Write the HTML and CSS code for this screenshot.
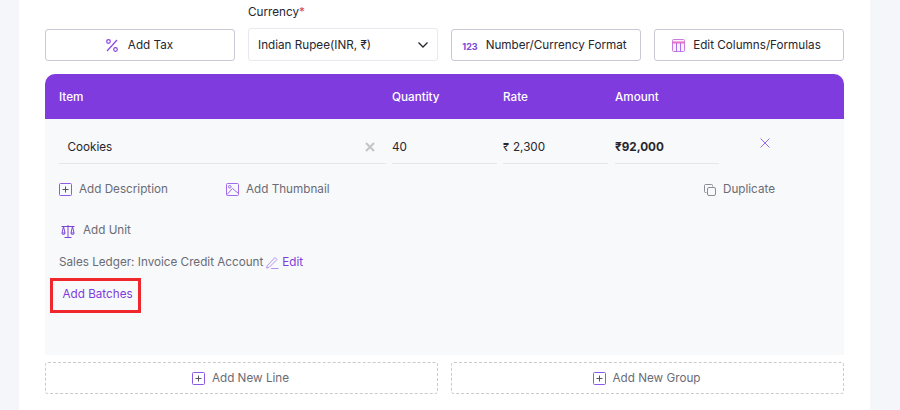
FILE: index.html
```html
<!DOCTYPE html>
<html lang="en">
  <head>
    <meta charset="utf-8"/>
    <title>Invoice items</title>
    <link rel="stylesheet" href="styles.css">
  </head>
  <body>
    <div class="sheet">
      <div class="toolbar">
        <button class="tool tool-tax">
          <svg class="icon" width="12" height="13" viewBox="0 0 12 13" fill="none" stroke="#8b45e6" stroke-width="1.2"><path d="M11 1 1 12"/><circle cx="2.500" cy="2.500" r="1.800"/><circle cx="9.500" cy="10.500" r="1.800"/></svg>
          Add Tax
        </button>
        <div class="field">
          <label class="label">Currency<span class="req">*</span></label>
          <div class="select">
            <span>Indian Rupee(INR, ₹)</span>
            <svg width="12" height="8" viewBox="0 0 12 8" fill="none" stroke="#26262e" stroke-width="1.3"><path d="M1.500 1.500 6 6l4.500-4.500"/></svg>
          </div>
        </div>
        <button class="tool tool-number">
          <span class="num-icon">123</span>
          Number/Currency Format
        </button>
        <button class="tool tool-columns">
          <svg class="icon" width="13" height="13" viewBox="0 0 13 13" fill="none" stroke="#c77ae0" stroke-width="1"><rect x="0.5" y="0.5" width="12" height="12" fill="#f9eefc" rx="1"/><path d="M0.5 3.500h12" stroke="#ec6fc4" stroke-width="2"/><path d="M4.500 4v9M8.500 4v9" stroke="#a66fe8"/></svg>
          Edit Columns/Formulas
        </button>
      </div>

      <div class="items">
        <div class="items-head row-grid">
          <div>Item</div>
          <div>Quantity</div>
          <div>Rate</div>
          <div class="col-amount">Amount</div>
        </div>
        <div class="items-body">
          <div class="row-grid">
            <div class="cell cell-item">
              <span>Cookies</span>
              <svg width="10" height="10" viewBox="0 0 10 10" fill="none" stroke="#c4c4c8" stroke-width="2"><path d="M1 1l8 8M9 1 1 9"/></svg>
            </div>
            <div class="cell">40</div>
            <div class="cell cell-rate"><span class="rupee">₹</span> 2,300</div>
            <div class="cell cell-total col-amount">₹92,000</div>
            <svg class="remove" width="10" height="10" viewBox="0 0 10 10" fill="none" stroke="#8b5be6" stroke-width="0.9"><path d="M.5.5l9 9M9.500.5l-9 9"/></svg>
          </div>

          <div class="links">
            <a class="link link-desc">
              <svg class="plus" width="13" height="13" viewBox="0 0 13 13" fill="none" stroke="#8b5be6"><rect x="0.5" y="0.5" width="12" height="12" rx="1"/><path d="M6.500 3.500v6M3.500 6.500h6" stroke="#55555f"/></svg>
              Add Description
            </a>
            <a class="link">
              <svg class="plus" width="13" height="13" viewBox="0 0 13 13" fill="none" stroke="#a06cea"><rect x="0.5" y="0.5" width="12" height="12" rx="1"/><circle cx="3.800" cy="3.800" r="1.300"/><path d="M.5 12 6.500 5.500l6 5"/></svg>
              Add Thumbnail
            </a>
            <a class="link link-copy">
              <svg class="plus" width="12" height="12" viewBox="0 0 12 12" fill="none" stroke="#8d8d95"><rect x="3.500" y="3.500" width="8" height="8" rx="1.500" fill="#f8f9fb"/><path d="M2.500 8.500h-1a1 1 0 0 1-1-1v-6a1 1 0 0 1 1-1h6a1 1 0 0 1 1 1v1"/></svg>
              Duplicate
            </a>
          </div>

          <a class="link link-unit">
            <svg class="scale" width="14" height="14" viewBox="0 0 14 14" fill="none" stroke="#7d45d8"><path d="M7 1v12M3.500 13.500h7M.5 2.500h13"/><path d="M2.500 2.500 1 9h3zM11.500 2.500 10 9h3z"/><path d="M1 9a1.500 1.500 0 0 0 3 0M10 9a1.500 1.500 0 0 0 3 0"/></svg>
            Add Unit
          </a>

          <div class="ledger">
            Sales Ledger: Invoice Credit Account
            <svg class="pen" width="13" height="13" viewBox="0 0 13 13" fill="none" stroke="#b490ee"><path d="M1 10 9 1.500l2 2L3 11.500l-2.500.5zM5 12.500h7.500"/></svg>
            <a class="purple">Edit</a>
          </div>

          <div class="batches"><a class="purple">Add Batches</a></div>
        </div>
      </div>

      <div class="adders">
        <button class="adder">
          <svg class="plus" width="13" height="13" viewBox="0 0 13 13" fill="none" stroke="#8b5be6"><rect x="0.5" y="0.5" width="12" height="12" rx="1"/><path d="M6.500 3.500v6M3.500 6.500h6" stroke="#55555f"/></svg>
          Add New Line
        </button>
        <button class="adder">
          <svg class="plus" width="13" height="13" viewBox="0 0 13 13" fill="none" stroke="#8b5be6"><rect x="0.5" y="0.5" width="12" height="12" rx="1"/><path d="M6.500 3.500v6M3.500 6.500h6" stroke="#55555f"/></svg>
          Add New Group
        </button>
      </div>
    </div>
  </body>
</html>
```

FILE: styles.css
```css
* {
  box-sizing: border-box;
}
html, body {
  height: 100%;
}
body {
  margin: 0;
  background: #f5f6fa;
  font-family: Inter, "Liberation Sans", sans-serif;
  font-size: 11.7px;
  color: #26262e;
  overflow: hidden;
}
.sheet {
  width: 851px;
  height: 410px;
  margin-left: 19px;
  padding: 0 26px;
  background: #fff;
}
.toolbar {
  display: grid;
  grid-template-columns: repeat(4, 190px);
  column-gap: 13px;
  align-items: end;
  height: 74px;
  padding-bottom: 13px;
}
.tool {
  display: flex;
  align-items: center;
  justify-content: center;
  gap: 9px;
  height: 32px;
  padding: 0;
  background: #fff;
  border: 1px solid #c9c9d6;
  border-radius: 3px;
  font: inherit;
  color: inherit;
}
.tool-tax {
  gap: 10px;
  padding-right: 1px;
}
.tool-number {
  gap: 8px;
  padding-right: 3px;
}
.tool-columns {
  gap: 8px;
  padding-right: 5px;
}
.icon {
  flex: none;
}
.num-icon {
  font-size: 9px;
  font-weight: 700;
  color: #7d45d8;
  margin-top: 2px;
}
.label {
  display: block;
  margin-bottom: 8px;
  line-height: 15px;
}
.req {
  color: #e04545;
}
.select {
  display: flex;
  align-items: center;
  justify-content: space-between;
  height: 33px;
  padding: 0 8px 0 9px;
  background: #fff;
  border: 1px solid #e8e8ee;
  border-radius: 3px;
}
.items {
  width: 799px;
}
.row-grid {
  display: grid;
  grid-template-columns: 327px 105px 105px 105px 1fr;
  column-gap: 6px;
}
.col-amount {
  margin-left: 1px;
}
.items-head {
  height: 45px;
  align-items: center;
  padding: 0 14px;
  background: #7f3bdd;
  border-radius: 10px 10px 0 0;
  color: #fff;
  font-weight: 500;
}
.items-body {
  height: 236px;
  padding: 0 14px;
  background: #f8f9fb;
}
.cell {
  display: flex;
  align-items: center;
  height: 45px;
  border-bottom: 1px solid #e6e6ec;
  padding-top: 11px;
}
.cell-item {
  justify-content: space-between;
  padding-left: 8.5px;
  padding-right: 11px;
}
.cell-rate {
  gap: 4px;
}
.rupee {
  font-size: 11px;
}
.cell-total {
  font-weight: 700;
}
.remove {
  margin: 19px 0 0 35px;
}
.links {
  display: flex;
  align-items: center;
  margin-top: 18px;
}
.link {
  display: inline-flex;
  align-items: center;
  gap: 7px;
  color: #6b6b75;
  line-height: 15px;
}
.link-desc {
  width: 167px;
}
.link-copy {
  margin-left: auto;
  margin-right: 55px;
}
.link-unit {
  gap: 8px;
  margin: 26px 0 0 2px;
}
.ledger {
  display: flex;
  align-items: center;
  gap: 3px;
  margin-top: 14px;
  color: #6b6b75;
  line-height: 15px;
}
.purple {
  color: #7f3bdd;
}
.batches {
  display: flex;
  align-items: center;
  width: 91px;
  height: 35px;
  margin: 8px 0 0 -9px;
  padding: 0 0 2px 9.5px;
  border: 3px solid #f0282d;
}
.adders {
  display: grid;
  grid-template-columns: 393px 393px;
  column-gap: 13px;
  margin-top: 7px;
}
.adder {
  display: flex;
  align-items: center;
  justify-content: center;
  gap: 7px;
  height: 32px;
  padding: 0 2px 0 0;
  background: #fff;
  border: 1px dashed #c9c9d0;
  border-radius: 3px;
  font: inherit;
  color: #6b6b75;
}
```
